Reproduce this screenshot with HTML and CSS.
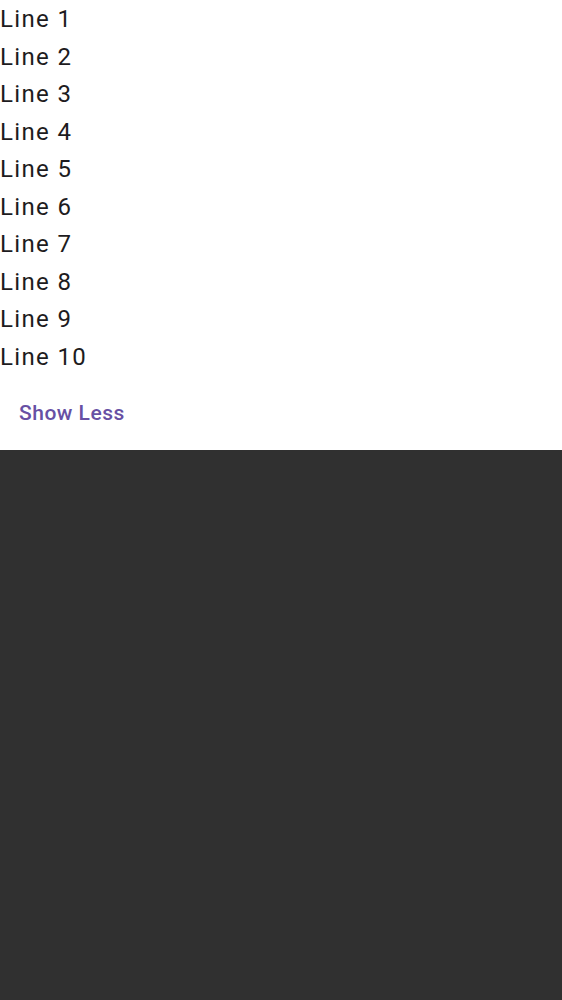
FILE: index.html
```html
<!DOCTYPE html>
<html>
<head>
<meta charset="utf-8">
<link rel="stylesheet" href="styles.css">
</head>
<body>
<div class="panel">
  <div class="lines">
    <div class="line">Line 1</div>
    <div class="line">Line 2</div>
    <div class="line">Line 3</div>
    <div class="line">Line 4</div>
    <div class="line">Line 5</div>
    <div class="line">Line 6</div>
    <div class="line">Line 7</div>
    <div class="line">Line 8</div>
    <div class="line">Line 9</div>
    <div class="line">Line 10</div>
  </div>
  <div class="actions">
    <button class="text-btn">Show Less</button>
  </div>
</div>
</body>
</html>
```
FILE: styles.css
```css
html, body {
  margin: 0;
  padding: 0;
  background: #303030;
  height: 100%;
}
.panel {
  background: #ffffff;
  height: 450px;
  display: flex;
  flex-direction: column;
}
.lines {
  display: flex;
  flex-direction: column;
  padding-top: 1px;
}
.line {
  font-family: Roboto, sans-serif;
  font-size: 24px;
  line-height: 37.5px;
  letter-spacing: 1.35px;
  color: #1d1b20;
}
.actions {
  display: flex;
  height: 74px;
  align-items: center;
}
.text-btn {
  font-family: Roboto, sans-serif;
  font-weight: 500;
  font-size: 21px;
  letter-spacing: 0.5px;
  color: #6750a4;
  background: none;
  border: none;
  padding: 0 18px 0 19px;
  margin-top: -1px;
  height: 60px;
  cursor: pointer;
}
```
